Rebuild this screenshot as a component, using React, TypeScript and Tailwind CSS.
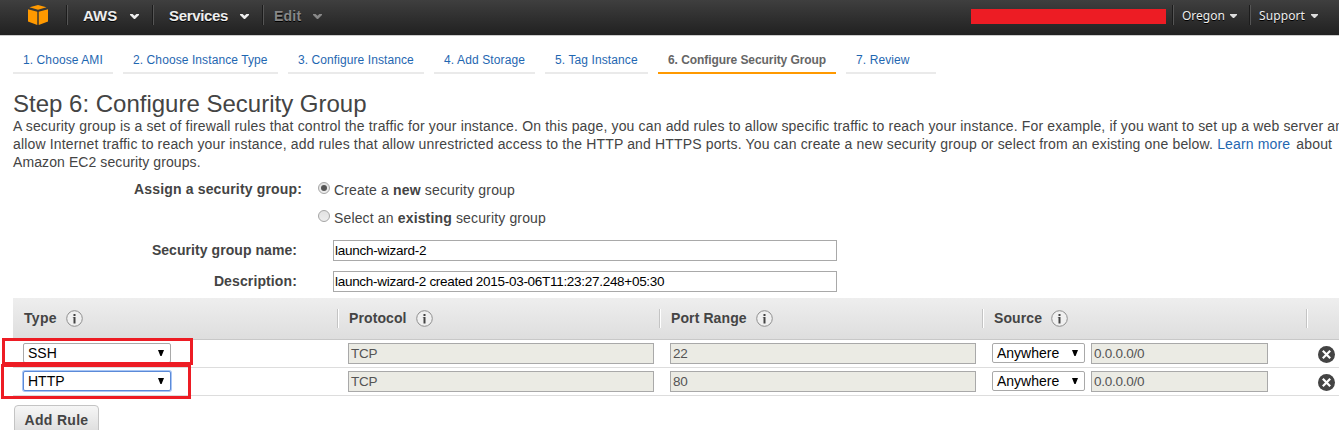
import React from "react";

const Sep = () => <div className="h-5 w-[2px] border-l border-r border-l-[#1c1c1c] border-r-[#555]" />;

const Chevron = ({ color }: { color: string }) => (
  <svg width="9" height="5" viewBox="0 0 9 5" className="mt-px shrink-0">
    <path d="M0 0H2.6L4.5 1.8L6.4 0H9V1L5 5H4L0 1Z" fill={color} />
  </svg>
);

const Caret = () => (
  <svg width="7" height="4" viewBox="0 0 7 4" className="mt-px shrink-0">
    <path d="M0 0H7V1L4 4H3L0 1Z" fill="#ddd" />
  </svg>
);

const Info = () => (
  <svg width="17" height="17" viewBox="0 0 17 17" className="shrink-0">
    <circle cx="8.5" cy="8.5" r="7.8" fill="#f0f0f0" stroke="#8f8f8f" />
    <path d="M7.5 4H9.5V6H7.5ZM6.8 7H9.5V13.4H7.5V7.6H6.8Z" fill="#444" />
  </svg>
);

const Close = () => (
  <svg width="17" height="17" viewBox="0 0 17 17" className="mt-[3px] shrink-0">
    <circle cx="8.5" cy="8.5" r="8.5" fill="#444" />
    <path d="M4.8 4.8L12.2 12.2M12.2 4.8L4.8 12.2" stroke="#fff" strokeWidth="2.2" />
  </svg>
);

const Arrow = () => (
  <svg width="6" height="6" viewBox="0 0 6 6" className="shrink-0">
    <path d="M0 0H6L3.6 6H2.4Z" fill="#000" />
  </svg>
);

const steps = [
  { t: "1. Choose AMI", c: "w-[100px] tracking-[0.09px]" },
  { t: "2. Choose Instance Type", c: "w-[155px] tracking-[0.09px]" },
  { t: "3. Configure Instance", c: "w-[136px] tracking-[0.08px]" },
  { t: "4. Add Storage", c: "w-[101px] tracking-[0.12px]" },
  { t: "5. Tag Instance", c: "w-[103px] tracking-[0.1px]" },
  { t: "6. Configure Security Group", c: "w-[178px] tracking-[-0.07px]", on: true },
  { t: "7. Review", c: "w-[90px] tracking-[0.1px]" },
];

const Head = ({ t, c, first }: { t: string; c: string; first?: boolean }) => (
  <div className={`flex h-full items-center ${c}`}>
    {!first && <div className="h-[19px] w-[2px] border-l border-r border-l-[#c4c4c4] border-r-white" />}
    <span className={`text-[14px] font-bold ${first ? "ml-[11px] tracking-[0.3px]" : "ml-[10px] tracking-[0.1px]"}`}>{t}</span>
    {t && <span className="ml-[9px] flex"><Info /></span>}
  </div>
);

const Field = ({ t, c }: { t: string; c: string }) => (
  <div className={`h-[21px] border border-[#a9a9a9] bg-[#ebebe4] pl-[2px] text-[13.5px] leading-[19px] tracking-[-0.25px] text-[#545454] ${c}`}>{t}</div>
);

const Select = ({ t, c }: { t: string; c: string }) => (
  <div className={`flex h-[20px] items-center justify-between rounded-[2px] border bg-white pl-1 text-[14px] text-black ${c}`}>
    <span>{t}</span>
    <Arrow />
  </div>
);

const Row = ({ type, port, focus }: { type: string; port: string; focus?: boolean }) => (
  <div className="flex h-7 items-start border-b border-[#ddd] pt-[3px]">
    <Select t={type} c={focus ? "ml-[10px] w-[148px] pr-[6px] border-[#5b8ad8] shadow-[0_0_0_1px_#a9c6f5]" : "ml-[10px] w-[148px] pr-[6px] border-[#a9a9a9]"} />
    <Field t="TCP" c="ml-[177px] w-[306px]" />
    <Field t={port} c="ml-4 w-[306px]" />
    <Select t="Anywhere" c="ml-4 w-[93px] border-[#a9a9a9] pr-[6px]" />
    <Field t="0.0.0.0/0" c="ml-[6px] w-[177px]" />
    <div className="ml-[50px]"><Close /></div>
  </div>
);

const Radio = ({ on }: { on?: boolean }) => (
  <div className="flex size-3 items-center justify-center rounded-full border border-[#a5a5a5] bg-linear-to-b from-[#e2e2e2] to-[#ededed]">
    {on && <div className="size-[6px] rounded-full bg-[#555]" />}
  </div>
);

export default function App() {
  return (
    <div className="relative h-[430px] w-[1339px] overflow-hidden bg-white font-['Liberation_Sans',Arial,sans-serif] text-[#444]">
      <header className="flex h-9 items-start border-b border-[#ccc] bg-linear-to-b from-[#3f3f3f] to-[#212121] pt-[5px] font-bold text-[#eee] text-shadow-[0_1px_0_#000]">
        <svg width="20" height="20" viewBox="0 0 20 20" className="ml-7">
          <path d="M1.5 2.3L10 0L18.5 2.3L10 4.8ZM0 4.2L9.3 6.7V20L0 16.4ZM10.7 6.7L20 4.2V16.4L10.7 20Z" fill="#f90" />
        </svg>
        <div className="ml-[18px] flex h-5"><Sep /></div>
        <div className="flex h-[22px] w-[84px] items-center pl-[15px]"><span className="w-[47px] text-[15px]">AWS</span><Chevron color="#eee" /></div>
        <Sep />
        <div className="flex h-[22px] w-[108px] items-center pl-[15px]"><span className="w-[71px] text-[15px] tracking-[-0.35px]">Services</span><Chevron color="#eee" /></div>
        <Sep />
        <div className="flex h-[22px] items-center pl-[10px] text-[#888]"><span className="w-[39px] text-[14px] tracking-[0.2px]">Edit</span><Chevron color="#888" /></div>
        <div className="ml-[649px] mt-1 h-[15px] w-[195px] bg-[#ed1c24]" />
        <div className="ml-[6px]"><Sep /></div>
        <div className="flex h-[21px] w-[75px] items-center pl-2 font-['Noto_Sans',sans-serif]"><span className="w-[48px] text-[12px] font-normal">Oregon</span><Caret /></div>
        <Sep />
        <div className="flex h-[21px] items-center pl-2 font-['Noto_Sans',sans-serif]"><span className="w-[52px] text-[12px] font-normal tracking-[0.1px]">Support</span><Caret /></div>
      </header>

      <nav className="mt-4 ml-[13px] flex h-[22px] gap-[10px] text-[12px]">
        {steps.map((s) => (
          <div key={s.t} className={`flex h-[22px] shrink-0 justify-start border-b-2 pl-[10px] leading-4 whitespace-nowrap ${s.c} ${s.on ? "border-[#f90] font-bold text-[#666]" : "border-[#eaeaea] text-[#1f67b1]"}`}>
            <span>{s.t}</span>
          </div>
        ))}
      </nav>

      <h1 className="mt-[16px] ml-[13px] h-[27px] text-[24px] leading-[28px] whitespace-nowrap">Step 6: Configure Security Group</h1>
      <div className="ml-[13px] w-[1400px] text-[14px] leading-[18px] whitespace-nowrap">
        <p className="tracking-[0.156px]">A security group is a set of firewall rules that control the traffic for your instance. On this page, you can add rules to allow specific traffic to reach your instance. For example, if you want to set up a web server and</p>
        <p className="tracking-[0.155px]">allow Internet traffic to reach your instance, add rules that allow unrestricted access to the HTTP and HTTPS ports. You can create a new security group or select from an existing one below. <a className="text-[#1f67b1]">Learn more</a> <span className="ml-[2px]">about</span></p>
        <p className="tracking-[0.09px]">Amazon EC2 security groups.</p>
      </div>

      <div className="mt-[9px] flex h-7 text-[14px] leading-[18px] tracking-[0.16px]">
        <span className="w-[302px] text-right font-bold">Assign a security group:</span>
        <span className="ml-4 mt-[2px]"><Radio on /></span>
        <span className="ml-1 mt-[1px]">Create a <b>new</b> security group</span>
      </div>
      <div className="flex h-[32px] text-[14px] leading-[18px] tracking-[0.15px]">
        <span className="ml-[318px] mt-[2px]"><Radio /></span>
        <span className="ml-1 mt-[1px]">Select an <b>existing</b> security group</span>
      </div>
      <div className="flex h-[31px] text-[14px] leading-[21px]">
        <span className="w-[297px] text-right font-bold tracking-[0.06px]">Security group name:</span>
        <div className="ml-9 h-[21px] w-[504px] border border-[#a9a9a9] pl-px text-[13.5px] leading-[19px] tracking-[-0.27px] text-black">launch-wizard-2</div>
      </div>
      <div className="flex h-[27px] text-[14px] leading-[21px]">
        <span className="w-[297px] text-right font-bold tracking-[0.12px]">Description:</span>
        <div className="ml-9 h-[21px] w-[504px] border border-[#a9a9a9] pl-px text-[13.5px] leading-[19px] tracking-[-0.29px] text-black">launch-wizard-2 created 2015-03-06T11:23:27.248+05:30</div>
      </div>

      <div className="ml-[13px] w-[1326px]">
        <div className="flex h-[42px] items-center border-b border-[#c8c8c8] bg-linear-to-b from-[#eee] to-[#dedede]">
          <Head t="Type" c="w-[324px]" first />
          <Head t="Protocol" c="w-[322px]" />
          <Head t="Port Range" c="w-[323px]" />
          <Head t="Source" c="w-[324px]" />
          <Head t="" c="w-[30px]" />
        </div>
        <Row type="SSH" port="22" />
        <Row type="HTTP" port="80" focus />
      </div>
      <button className="mt-[9px] ml-[14px] block h-[30px] w-[85px] rounded-[4px] border border-[#c4c4c4] bg-linear-to-b from-[#f6f6f6] to-[#dcdcdc] text-[14px] font-bold tracking-[0.3px]">Add Rule</button>

      <div className="absolute top-[338px] left-[2px] h-[27px] w-[191px] border-[3px] border-[#ed1c24]" />
      <div className="absolute top-[364px] left-[1px] h-[35px] w-[190px] border-[3px] border-[#ed1c24]" />
    </div>
  );
}
